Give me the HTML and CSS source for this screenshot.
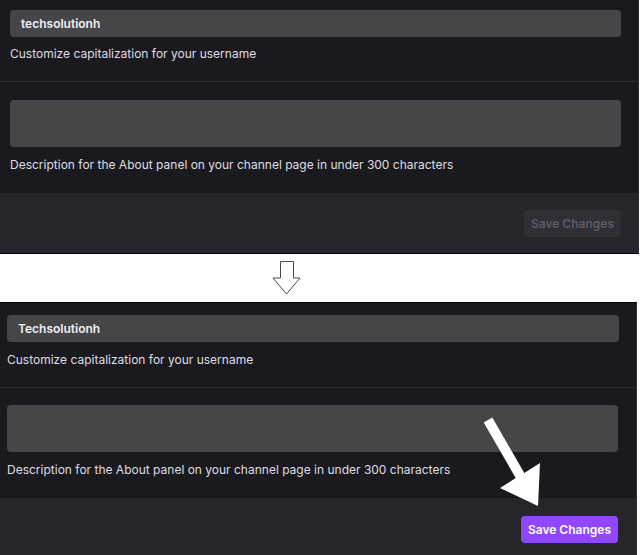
FILE: index.html
```html
<!DOCTYPE html>
<html lang="en">
<head>
    <meta charset="UTF-8">
    <meta name="viewport" content="width=device-width, initial-scale=1.0">
    <title>Channel settings - before / after</title>
    <link rel="stylesheet" href="styles.css">
</head>
<body>
    <!-- before -->
    <div class="panel panel-before">
        <div class="field field-name">
            <div class="input">techsolutionh</div>
            <p class="hint">Customize capitalization for your username</p>
        </div>
        <div class="field field-bio">
            <div class="textarea"></div>
            <p class="hint">Description for the About panel on your channel page in under 300 characters</p>
        </div>
        <div class="footer">
            <button class="btn" disabled>Save Changes</button>
        </div>
    </div>

    <div class="gap">
        <svg class="down-arrow" width="30" height="36" viewBox="0 0 30 36">
            <polygon points="8.5,1.5 21.5,1.5 21.5,18 28,18 14.5,34 1,18 8.5,18" fill="#fff" stroke="#4a4a4a" stroke-width="1"/>
        </svg>
    </div>

    <!-- after -->
    <div class="panel panel-after">
        <div class="field field-name">
            <div class="input">Techsolutionh</div>
            <p class="hint">Customize capitalization for your username</p>
        </div>
        <div class="field field-bio">
            <div class="textarea"></div>
            <p class="hint">Description for the About panel on your channel page in under 300 characters</p>
        </div>
        <div class="footer">
            <button class="btn btn-active">Save Changes</button>
        </div>

        <svg class="pointer" width="64" height="100" viewBox="0 0 64 100">
            <polygon points="3.7,12.5 12.3,7.5 44.3,63 60,53 58,96 20,78 35.7,68" fill="#fff"/>
        </svg>
    </div>
</body>
</html>
```

FILE: styles.css
```css
* {
    margin: 0;
    padding: 0;
    box-sizing: border-box;
}

body {
    background: #fff;
    font-family: Inter, "Noto Sans", sans-serif;
    width: 640px;
    height: 555px;
    overflow: hidden;
}

.panel {
    background-color: #1a191e;
    color: #dedee3;
    position: relative;
}

.panel-before {
    width: 639px;
    border-right: 1px solid #2c2c31;
    border-bottom: 1px solid #000;
}

.panel-after {
    width: 637px;
    border-right: 1px solid #2c2c31;
    border-top: 1px solid #000;
}

.field {
    display: flex;
    flex-direction: column;
}

.field-name {
    padding: 10px 17px 20px 10px;
    border-bottom: 1px solid #2e2d33;
}

.field-bio {
    padding: 18px 17px 21px 10px;
}

.panel-after .field-name {
    padding: 12px 17px 20px 7px;
}

.panel-after .field-bio {
    padding: 17px 18px 21px 7px;
}

.input {
    height: 27px;
    background-color: #464649;
    border-radius: 4px;
    padding: 0 11px;
    display: flex;
    align-items: center;
    color: #efeff1;
    font-size: 12px;
    font-weight: 600;
}

.textarea {
    height: 47px;
    background-color: #464649;
    border-radius: 4px;
}

.hint {
    margin-top: 10px;
    font-size: 12px;
    line-height: 14px;
}

.field-bio .hint {
    margin-top: 11px;
}

.panel-after .hint {
    margin-top: 11px;
}

.footer {
    background-color: #26252b;
    height: 60px;
    display: flex;
    justify-content: flex-end;
    align-items: flex-start;
    padding: 17px 17px 0 0;
}

.panel-after .footer {
    height: 57px;
    padding: 18px 18px 0 0;
}

.btn {
    height: 27px;
    padding: 0 7px;
    border: none;
    border-radius: 4px;
    background-color: #2f2f35;
    color: #5c5c63;
    font-family: inherit;
    font-size: 12px;
    font-weight: 600;
}

.btn-active {
    background-color: #9147ff;
    color: #fff;
}

.gap {
    height: 48px;
    display: flex;
    padding: 6px 0 0 272px;
}

.pointer {
    position: absolute;
    left: 480px;
    top: 107px;
}
```
